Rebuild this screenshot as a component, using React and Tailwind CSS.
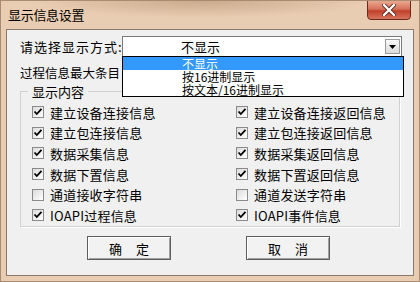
import React from 'react';

const leftItems = [
  { label: '建立设备连接信息', checked: true },
  { label: '建立包连接信息', checked: true },
  { label: '数据采集信息', checked: true },
  { label: '数据下置信息', checked: true },
  { label: '通道接收字符串', checked: false },
  { label: 'IOAPI过程信息', checked: true },
];

const rightItems = [
  { label: '建立设备连接返回信息', checked: true },
  { label: '建立包连接返回信息', checked: true },
  { label: '数据采集返回信息', checked: true },
  { label: '数据下置返回信息', checked: true },
  { label: '通道发送字符串', checked: false },
  { label: 'IOAPI事件信息', checked: true },
];

function CheckBox({ checked }) {
  return (
    <span className="w-[12px] h-[12px] border border-[#8a8a8a] bg-[linear-gradient(135deg,#dcdcdc,#ffffff)] flex items-center justify-center shrink-0">
      {checked && (
        <svg width="10" height="10" viewBox="0 0 10 10">
          <polyline points="1.5,4.5 3.8,7 8.5,1.8" fill="none" stroke="#000" strokeWidth="1.8" />
        </svg>
      )}
    </span>
  );
}

function CheckRow({ label, checked }) {
  return (
    <div className="h-[20.6px] flex items-center gap-[6px]">
      <CheckBox checked={checked} />
      <span className="text-[13px] leading-none tracking-[0.2px] whitespace-nowrap">{label}</span>
    </div>
  );
}

function Button({ children }) {
  return (
    <button className="w-[84px] h-[24px] border border-[#5e5e5e] bg-[#f2f2f2] shadow-[inset_1px_1px_0_#ffffff,inset_-1px_-1px_0_#a0a0a0] text-[13px] leading-none tracking-[14px] pl-[14px]">
      {children}
    </button>
  );
}

export default function App() {
  return (
    <div className="w-[420px] h-[282px] flex flex-col bg-[#e9cdb2] border border-[#a88b70] text-black font-['Noto_Sans_CJK_SC',sans-serif] overflow-hidden">
      {/* title bar */}
      <div className="h-[28px] relative flex items-start pl-[7px] pt-[7px] bg-[radial-gradient(ellipse_40%_60%_at_48%_0%,#c9aa8c_0%,rgba(233,205,178,0)_100%)]">
        <span className="text-[13px] leading-none tracking-[-0.3px]">显示信息设置</span>
        <div className="absolute right-[8px] top-[-1px] w-[44px] h-[20px] rounded-b-[4px] border border-[#6b2a1e] bg-[linear-gradient(#eba890_0%,#d5715a_45%,#c0402a_55%,#d8745e_100%)] flex items-center justify-center">
          <svg width="14" height="12" viewBox="0 0 14 12">
            <path d="M2 1 L12 11 M12 1 L2 11" stroke="#5a2a20" strokeWidth="4" strokeLinecap="round" />
            <path d="M2 1 L12 11 M12 1 L2 11" stroke="#ffffff" strokeWidth="2.4" strokeLinecap="round" />
          </svg>
        </div>
      </div>

      {/* client area */}
      <div className="flex-1 mx-[5px] mb-[5px] border border-[#8a7868] bg-[#f0f0f0] relative flex flex-col">
        <div className="mt-[6px] h-[21px] flex items-center pl-[13px]">
          <span className="w-[102px] shrink-0 text-[13px] leading-none tracking-[1px] whitespace-nowrap">请选择显示方式:</span>
          <div className="w-[280px] h-[21px] border border-[#7a7a7a] bg-white flex items-center">
            <span className="flex-1 pl-[58px] text-[13px] leading-none">不显示</span>
            <div className="w-[15px] h-[15px] mr-[1px] border border-[#9a9a9a] bg-[linear-gradient(#fafafa,#dadada)] flex items-center justify-center">
              <svg width="7" height="4" viewBox="0 0 7 4">
                <path d="M0 0 H7 L3.5 4 Z" fill="#000" />
              </svg>
            </div>
          </div>
        </div>

        <div className="mt-[6px] h-[20px] flex items-center pl-[13px]">
          <span className="text-[12.5px] leading-none whitespace-nowrap">过程信息最大条目</span>
        </div>

        {/* group box */}
        <fieldset className="mx-[13px] mt-[2px] h-[142px] border border-[#d0d0d0] shadow-[1px_1px_0_#ffffff] pl-[11px] pr-0 pt-[4px]">
          <legend className="ml-[-4px] px-[4px] text-[13px] leading-none">显示内容</legend>
          <div className="grid grid-cols-[204px_1fr]">
            <div className="flex flex-col">
              {leftItems.map((it) => (
                <CheckRow key={it.label} {...it} />
              ))}
            </div>
            <div className="flex flex-col">
              {rightItems.map((it) => (
                <CheckRow key={it.label} {...it} />
              ))}
            </div>
          </div>
        </fieldset>

        <div className="mt-[9px] flex pl-[80px] gap-[75px]">
          <Button>确定</Button>
          <Button>取消</Button>
        </div>

        {/* open dropdown list */}
        <div className="absolute left-[115px] top-[26px] w-[282px] h-[41px] border border-black bg-white flex flex-col">
          <div className="h-[13px] bg-[#3399ff] text-white text-[12px] leading-[13px] pl-[59px] whitespace-nowrap">不显示</div>
          <div className="h-[13px] text-[12px] leading-[13px] pl-[59px] whitespace-nowrap">按16进制显示</div>
          <div className="h-[13px] text-[12px] leading-[13px] pl-[59px] whitespace-nowrap">按文本/16进制显示</div>
        </div>
      </div>
    </div>
  );
}
